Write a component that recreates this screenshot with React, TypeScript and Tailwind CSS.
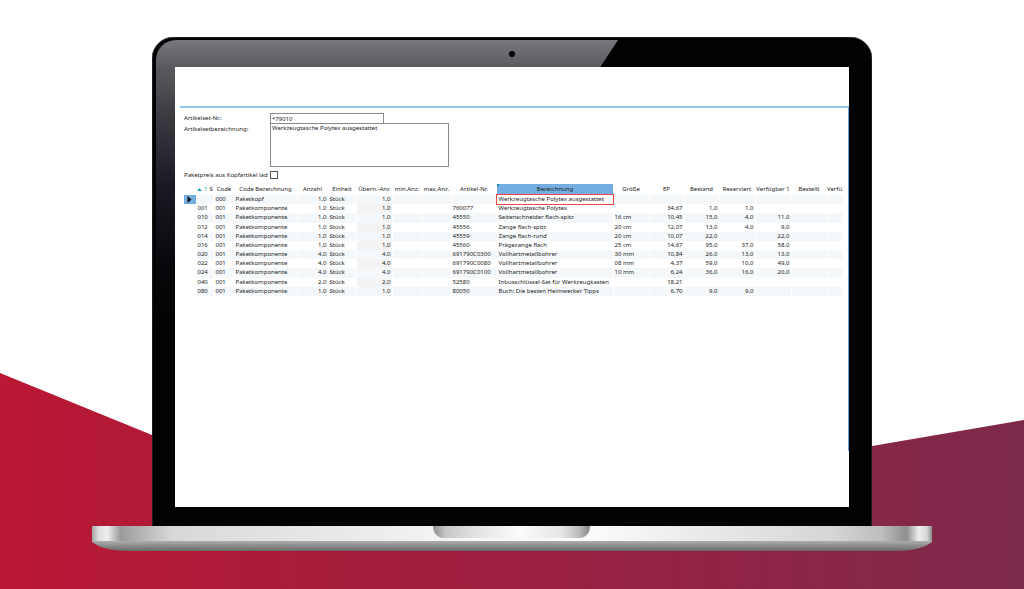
import { useState } from 'react'

interface ArticleRow {
  pos: string
  code: string
  codeName: string
  count: string
  carried: string
  articleNo: string
  name: string
  size: string
  price: string
  stock: string
  reserved: string
  available: string
}

const makeRow = (
  pos: string, count: string, articleNo: string, name: string, size: string,
  price: string, stock: string, reserved: string, available: string
): ArticleRow => ({
  pos,
  code: pos ? '001' : '000',
  codeName: pos ? 'Paketkomponente' : 'Paketkopf',
  count,
  carried: count,
  articleNo,
  name,
  size,
  price,
  stock,
  reserved,
  available
})

const rows: ArticleRow[] = [
  makeRow('', '1,0', '', 'Werkzeugtasche Polytex ausgestattet', '', '', '', '', ''),
  makeRow('001', '1,0', '760077', 'Werkzeugtasche Polytex', '', '34,67', '1,0', '1,0', ''),
  makeRow('010', '1,0', '45550', 'Seitenschneider flach-spitz', '16 cm', '10,45', '15,0', '4,0', '11,0'),
  makeRow('012', '1,0', '45556', 'Zange flach-spitz', '20 cm', '12,07', '13,0', '4,0', '9,0'),
  makeRow('014', '1,0', '45559', 'Zange flach-rund', '20 cm', '10,07', '22,0', '', '22,0'),
  makeRow('016', '1,0', '45560', 'Prägezange flach', '25 cm', '14,67', '95,0', '37,0', '58,0'),
  makeRow('020', '4,0', '691790C0300', 'Vollhartmetallbohrer', '30 mm', '10,84', '26,0', '13,0', '13,0'),
  makeRow('022', '4,0', '691790C0080', 'Vollhartmetallbohrer', '08 mm', '4,37', '59,0', '10,0', '49,0'),
  makeRow('024', '4,0', '691790C0100', 'Vollhartmetallbohrer', '10 mm', '6,24', '36,0', '16,0', '20,0'),
  makeRow('040', '2,0', '52580', 'Inbusschlüssel-Set für Werkzeugkasten', '', '18,21', '', '', ''),
  makeRow('080', '1,0', '80050', 'Buch: Die besten Heimwerker Tipps', '', '6,70', '9,0', '9,0', '')
]

const columnWidths = [12, 18, 20, 63, 31, 28, 36, 30, 29, 46, 116, 36, 35, 35, 36, 36, 36, 15]

function Backdrop() {
  return (
    <svg
      className="absolute inset-0 -z-10 h-full w-full"
      viewBox="0 0 1024 589"
      preserveAspectRatio="none"
      aria-hidden="true"
    >
      <defs>
        <linearGradient id="backdrop" x1="0" x2="1024" y1="0" y2="0" gradientUnits="userSpaceOnUse">
          <stop offset="0" stopColor="#ba1833" />
          <stop offset="0.5" stopColor="#9c1f40" />
          <stop offset="0.85" stopColor="#872749" />
          <stop offset="1" stopColor="#7c294a" />
        </linearGradient>
      </defs>
      <path d="M0 373 L152 435 L370 524 H660 L872 446 L1024 420 V589 H0 Z" fill="url(#backdrop)" />
    </svg>
  )
}

function LidGloss() {
  return (
    <svg
      className="absolute inset-0 -z-10 h-full w-full"
      viewBox="0 0 720 489"
      preserveAspectRatio="none"
      aria-hidden="true"
    >
      <defs>
        <linearGradient id="gloss" x1="0" x2="0" y1="0" y2="300" gradientUnits="userSpaceOnUse">
          <stop offset="0" stopColor="#7c797f" />
          <stop offset="0.1" stopColor="#5c595f" />
          <stop offset="0.27" stopColor="#3b3840" />
          <stop offset="0.5" stopColor="#1a1922" />
          <stop offset="0.75" stopColor="#08080c" />
          <stop offset="1" stopColor="#020203" />
        </linearGradient>
      </defs>
      <path d="M0 489 V22 A22 22 0 0 1 22 0 H698 A22 22 0 0 1 720 22 V489 Z" fill="#020203" />
      <path d="M4 300 V23 A20 20 0 0 1 24 3 H466 L447 32 L270 300 Z" fill="url(#gloss)" />
      <circle cx="360" cy="17" r="3" fill="#050505" />
      <path d="M0 489 V22 A22 22 0 0 1 22 0 H698 A22 22 0 0 1 720 22 V489" fill="none" stroke="#3c3c40" strokeWidth="1" />
    </svg>
  )
}

function LaptopBase() {
  return (
    <svg className="block w-full" viewBox="0 0 840 25" aria-hidden="true">
      <defs>
        <linearGradient id="deck">
          <stop offset="0" stopColor="#a5a5a5" />
          <stop offset="0.008" stopColor="#dedede" />
          <stop offset="0.018" stopColor="#eeeeee" />
          <stop offset="0.034" stopColor="#9b9b9b" />
          <stop offset="0.06" stopColor="#b5b5b5" />
          <stop offset="0.095" stopColor="#d8d8d8" />
          <stop offset="0.45" stopColor="#f6f6f6" />
          <stop offset="0.6" stopColor="#fafafa" />
          <stop offset="0.88" stopColor="#d6d6d6" />
          <stop offset="0.94" stopColor="#bdbdbd" />
          <stop offset="0.97" stopColor="#8f8f8f" />
          <stop offset="0.984" stopColor="#eeeeee" />
          <stop offset="0.994" stopColor="#d5d5d5" />
          <stop offset="1" stopColor="#8c8c8c" />
        </linearGradient>
        <linearGradient id="underside" x1="0" x2="0" y1="0" y2="1">
          <stop offset="0" stopColor="#b4b4b4" />
          <stop offset="1" stopColor="#6a6a6a" />
        </linearGradient>
        <linearGradient id="notch">
          <stop offset="0" stopColor="#8e8e8e" />
          <stop offset="0.08" stopColor="#c5c5c5" />
          <stop offset="0.25" stopColor="#e0e0e0" />
          <stop offset="0.55" stopColor="#fbfbfb" />
          <stop offset="0.82" stopColor="#e5e5e3" />
          <stop offset="0.93" stopColor="#bcbcba" />
          <stop offset="1" stopColor="#858585" />
        </linearGradient>
      </defs>
      <path d="M0 14 H840 V16 C832 22 820 25 804 25 H36 C20 25 8 22 0 16 Z" fill="url(#underside)" />
      <rect width="840" height="15" fill="url(#deck)" />
      <path d="M341 0 H498 C498 8 493 12 487 12 H352 C346 12 341 8 341 0 Z" fill="url(#notch)" />
    </svg>
  )
}

function ArticleForm() {
  const [articleSet, setArticleSet] = useState('*79010')
  const [description, setDescription] = useState('Werkzeugtasche Polytex ausgestattet')
  const [usePrice, setUsePrice] = useState(false)

  return (
    <form className="grid grid-cols-[86px_1fr] pt-[5px]">
      <label htmlFor="set-no" className="leading-[10px]">Artikelset-Nr.:</label>
      <input
        id="set-no"
        value={articleSet}
        onChange={(e) => setArticleSet(e.target.value)}
        className="h-[11px] w-[114px] border border-[#8a8a8a] px-px leading-[9px] outline-none"
      />
      <label htmlFor="set-name" className="leading-[10px]">Artikelsetbezeichnung:</label>
      <textarea
        id="set-name"
        value={description}
        onChange={(e) => setDescription(e.target.value)}
        className="-mt-px block h-[44px] w-[179px] resize-none border border-[#8a8a8a] px-px leading-[9px] outline-none"
      />
      <label htmlFor="use-price" className="mt-1 leading-[9px] whitespace-nowrap">
        Paketpreis aus Kopfartikel lad
      </label>
      <input
        id="use-price"
        type="checkbox"
        checked={usePrice}
        onChange={(e) => setUsePrice(e.target.checked)}
        className="mt-1 size-2 appearance-none border border-[#555] bg-white checked:bg-[#74aee0]"
      />
    </form>
  )
}

function ArticleTable() {
  return (
    <table className="mt-1 h-[112px] w-full table-fixed border-collapse leading-[9px] whitespace-nowrap">
      <colgroup>
        {columnWidths.map((width, i) => (
          <col key={i} style={{ width }} />
        ))}
      </colgroup>
      <thead>
        <tr className="h-[11px] *:p-0 *:font-normal">
          <th></th>
          <th>
            <span className="flex items-center gap-[2px] pl-px">
              <svg className="h-[3px] w-[5px] shrink-0" viewBox="0 0 5 3" aria-hidden="true">
                <path d="M0 3 L2.5 0 L5 3 Z" fill="#1b9fc0" />
              </svg>
              <span className="text-[#1b9fc0]">1</span>
              <span>S</span>
            </span>
          </th>
          <th>Code</th>
          <th>Code Bezeichnung</th>
          <th>Anzahl</th>
          <th>Einheit</th>
          <th>Übern.-Anz</th>
          <th>min.Anz.</th>
          <th>max.Anz.</th>
          <th>Artikel-Nr.</th>
          <th className="relative bg-[#74aee0]">
            <svg className="absolute top-0 left-0 size-[3px]" viewBox="0 0 3 3" aria-hidden="true">
              <path d="M0 0 H3 L0 3 Z" fill="#1287a8" />
            </svg>
            Bezeichnung
          </th>
          <th>Größe</th>
          <th>EP</th>
          <th>Bestand</th>
          <th>Reserviert</th>
          <th>Verfügbar 1</th>
          <th>Bestellt</th>
          <th>Verfü</th>
        </tr>
      </thead>
      <tbody>
        {rows.map((row, i) => (
          <tr
            key={i}
            className="*:border-r *:border-white *:px-px *:py-0 odd:bg-[#f4f8fa]"
          >
            <td className={i === 0 ? 'bg-[#74aee0]' : 'bg-white'}>
              {i === 0 && (
                <svg className="mx-auto block h-[7px] w-[5px]" viewBox="0 0 5 7" aria-hidden="true">
                  <path d="M0.5 0 L4.5 3.5 L0.5 7 Z" fill="#0a0f18" />
                </svg>
              )}
            </td>
            <td>{row.pos}</td>
            <td>{row.code}</td>
            <td>{row.codeName}</td>
            <td className="text-right">{row.count}</td>
            <td>Stück</td>
            <td className={i % 2 === 1 ? 'bg-[#f3f3f3] text-right' : 'text-right'}>{row.carried}</td>
            <td></td>
            <td></td>
            <td>{row.articleNo}</td>
            <td className={i === 0 ? 'relative z-10 bg-white outline outline-[#ee4444]' : ''}>{row.name}</td>
            <td>{row.size}</td>
            <td className="text-right">{row.price}</td>
            <td className="text-right">{row.stock}</td>
            <td className="text-right">{row.reserved}</td>
            <td className="text-right">{row.available}</td>
            <td></td>
            <td></td>
          </tr>
        ))}
      </tbody>
    </table>
  )
}

export default function App() {
  return (
    <main className="relative isolate min-h-screen overflow-hidden bg-white pt-[37px] font-['Noto_Sans','Open_Sans',sans-serif] text-[6px] text-[#1c1c1c]">
      <Backdrop />
      <div className="mx-auto w-full max-w-[840px]">
        {/* Lid */}
        <div className="relative isolate mx-auto w-full max-w-[720px] px-[23px] pt-[30px] pb-[19px]">
          <LidGloss />
          <div className="aspect-[674/440] bg-white pt-[39px] pl-[5px]">
            <section className="min-h-[345px] border-t-2 border-r border-t-[#94c8f2] border-r-[#60a8e0] pr-[6px] pl-1">
              <ArticleForm />
              <ArticleTable />
            </section>
          </div>
        </div>
        <LaptopBase />
      </div>
    </main>
  )
}
